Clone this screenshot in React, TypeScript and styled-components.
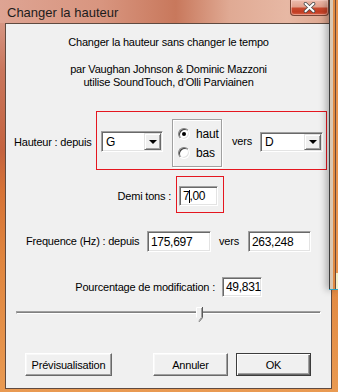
import React from "react";
import styled, { createGlobalStyle } from "styled-components";

const GlobalStyle = createGlobalStyle`
  * { box-sizing: border-box; }
  html, body { margin: 0; padding: 0; }
  body {
    width: 338px;
    height: 392px;
    overflow: hidden;
    background: #e08a40;
    font-family: "Liberation Sans", Arial, sans-serif;
  }
`;

const Window = styled.div`
  position: relative;
  width: 338px;
  height: 392px;
  display: flex;
  flex-direction: column;
  overflow: hidden;
  background:
    linear-gradient(90deg, #dea493 0%, #d8957f 30%, #c8785c 52%, #e0aa94 68%, #e7b8a4 85%, #dba28a 100%) top / 100% 23px no-repeat,
    linear-gradient(180deg, #dca494 0, #c9765c 70px, #c4633f 150px, #d67236 190px, #e0853e 260px, #e99a52 392px);
`;

const TitleBar = styled.div`
  height: 23px;
  flex: none;
  display: flex;
  align-items: flex-start;
  padding-left: 7px;
`;

const TitleText = styled.span`
  font-size: 13px;
  line-height: 23px;
  padding-top: 1px;
  color: #1c1c1c;
`;

const CloseButton = styled.div`
  margin-left: auto;
  margin-right: 9px;
  width: 39px;
  height: 16px;
  border: 1px solid #7a4636;
  border-top: none;
  border-radius: 0 0 4px 4px;
  display: flex;
  align-items: center;
  justify-content: center;
  background: linear-gradient(180deg, #ecbcad 0%, #e2a08c 45%, #c8492e 55%, #c23c22 80%, #d8654a 100%);
  box-shadow: inset 0 0 0 1px rgba(255, 220, 210, 0.45);
`;

const FrameRow = styled.div`
  flex: 1;
  display: flex;
  padding: 0 6px 3px 5px;
`;

const Client = styled.div`
  flex: 1;
  display: flex;
  flex-direction: column;
  border: 1px solid #5f4a40;
  background: #f0f0f0;
  font-size: 11px;
  letter-spacing: -0.2px;
  color: #000;
`;

const CenterLine = styled.div<{ $top: number }>`
  margin-top: ${(p) => p.$top}px;
  line-height: 13px;
  text-align: center;
  white-space: nowrap;
`;

const Row = styled.div<{ $top: number; $align?: string }>`
  margin-top: ${(p) => p.$top}px;
  display: flex;
  align-items: ${(p) => p.$align || "center"};
`;

const Label = styled.div<{ $width: number; $right?: boolean; $pad?: number; $top?: number }>`
  flex: none;
  width: ${(p) => p.$width}px;
  line-height: 13px;
  white-space: nowrap;
  text-align: ${(p) => (p.$right ? "right" : "left")};
  padding-left: ${(p) => (p.$right ? 0 : p.$pad || 0)}px;
  padding-right: ${(p) => (p.$right ? p.$pad || 0 : 0)}px;
  margin-top: ${(p) => p.$top || 0}px;
`;

const Highlight = styled.div<{ $width: number; $height: number; $pad: string }>`
  flex: none;
  width: ${(p) => p.$width}px;
  height: ${(p) => p.$height}px;
  border: 1px solid #e5161f;
  padding: ${(p) => p.$pad};
  display: flex;
  align-items: flex-start;
`;

const Combo = styled.div<{ $width: number; $height: number; $top: number; $auto?: boolean }>`
  flex: none;
  width: ${(p) => p.$width}px;
  height: ${(p) => p.$height}px;
  margin-top: ${(p) => p.$top}px;
  margin-left: ${(p) => (p.$auto ? "auto" : "0")};
  padding: 1px;
  display: flex;
  background: #fff;
  border: 1px solid;
  border-color: #a0a0a0 #fff #fff #a0a0a0;
  box-shadow: inset 1px 1px #696969, inset -1px -1px #e3e3e3;
`;

const ComboText = styled.div`
  flex: 1;
  padding-left: 3px;
  display: flex;
  align-items: center;
  font-size: 12px;
`;

const DropButton = styled.div`
  flex: none;
  width: 17px;
  display: flex;
  align-items: center;
  justify-content: center;
  background: #f0f0f0;
  border: 1px solid;
  border-color: #e3e3e3 #696969 #696969 #e3e3e3;
  box-shadow: inset 1px 1px #fff, inset -1px -1px #a0a0a0;
`;

const Arrow = styled.div`
  width: 0;
  height: 0;
  border-left: 4px solid transparent;
  border-right: 4px solid transparent;
  border-top: 4px solid #000;
`;

const RadioGroup = styled.div`
  flex: none;
  width: 50px;
  height: 48px;
  margin: 7px 0 0 9px;
  padding: 7px 0 0 5px;
  border: 1px solid #a0a0a0;
  box-shadow: inset 1px 1px #fff, 1px 1px #fff;
  display: flex;
  flex-direction: column;
  gap: 6px;
`;

const RadioRow = styled.div`
  height: 13px;
  display: flex;
  align-items: center;
  gap: 6px;
  font-size: 12px;
`;

const RadioDot = styled.div<{ $checked?: boolean }>`
  position: relative;
  width: 12px;
  height: 12px;
  border-radius: 50%;
  background: #fff;
  border: 1px solid;
  border-color: #808080 #fff #fff #808080;
  box-shadow: inset 1px 1px #404040, inset -1px -1px #e3e3e3;

  &::after {
    content: "";
    display: ${(p) => (p.$checked ? "block" : "none")};
    position: absolute;
    left: 3px;
    top: 3px;
    width: 4px;
    height: 4px;
    border-radius: 50%;
    background: #000;
  }
`;

const Word = styled.div<{ $left: number; $top?: number }>`
  flex: none;
  margin-left: ${(p) => p.$left}px;
  margin-top: ${(p) => p.$top || 0}px;
  line-height: 13px;
`;

const Field = styled.div<{ $width: number; $height: number; $left?: number; $top?: number }>`
  flex: none;
  width: ${(p) => p.$width}px;
  height: ${(p) => p.$height}px;
  margin-left: ${(p) => p.$left || 0}px;
  margin-top: ${(p) => p.$top || 0}px;
  padding-left: 3px;
  display: flex;
  align-items: center;
  background: #fff;
  font-size: 12px;
  letter-spacing: -0.3px;
  border: 1px solid;
  border-color: #a0a0a0 #fff #fff #a0a0a0;
  box-shadow: inset 1px 1px #696969, inset -1px -1px #e3e3e3;
`;

const Caret = styled.span`
  display: inline-block;
  width: 1px;
  height: 13px;
  margin-right: -1px;
  background: #000;
  vertical-align: middle;
`;

const Slider = styled.div`
  position: relative;
  margin: 8px 10px 0 10px;
  height: 16px;
  padding-top: 6px;
`;

const Track = styled.div`
  height: 3px;
  background: #808080;
  border: 1px solid;
  border-color: #a0a0a0 #fff #fff #a0a0a0;
`;

const Thumb = styled.svg`
  position: absolute;
  top: 2px;
`;

const ButtonRow = styled.div`
  margin-top: 32px;
  display: flex;
`;

const Button = styled.div<{ $width: number; $left: number; $default?: boolean }>`
  flex: none;
  width: ${(p) => p.$width}px;
  height: 23px;
  margin-left: ${(p) => p.$left}px;
  display: flex;
  align-items: center;
  justify-content: center;
  background: #f0f0f0;
  font-size: 11px;
  border: 1px solid;
  border-color: ${(p) => (p.$default ? "#3c3c3c" : "#fff #696969 #696969 #fff")};
  box-shadow: ${(p) =>
    p.$default
      ? "inset 1px 1px #fff, inset -1px -1px #696969, inset -2px -2px #a0a0a0"
      : "inset -1px -1px #a0a0a0, inset 1px 1px #f8f8f8"};
`;

const OtherWindow = styled.div`
  position: absolute;
  top: 0;
  right: 0;
  width: 9px;
  height: 290px;
  border-bottom: 1px solid #2aa4c4;
  box-shadow: -3px 0 7px rgba(0, 0, 0, 0.28);
  background: linear-gradient(
    90deg,
    #3c3c3c 0 1px,
    #d9c7b2 1px 4px,
    #e08a42 4px 6px,
    #6a4a3a 6px 7px,
    #e8924a 7px
  );

  &::after {
    content: "";
    position: absolute;
    right: 0;
    bottom: 0;
    width: 2px;
    height: 16px;
    background: #f4f0c8;
  }
`;

function CloseGlyph() {
  return (
    <svg width="13" height="11" viewBox="0 0 13 11">
      <path d="M2.5 1.8 L10.5 9.2 M10.5 1.8 L2.5 9.2" stroke="#4b4b4b" strokeWidth="3.6" strokeLinecap="round" />
      <path d="M2.5 1.8 L10.5 9.2 M10.5 1.8 L2.5 9.2" stroke="#fff" strokeWidth="2" strokeLinecap="round" />
    </svg>
  );
}

export default function App() {
  // slider position in the range, thumb drawn over the groove
  const sliderPos = 0.6;

  return (
    <>
      <GlobalStyle />
      <Window>
        <TitleBar>
          <TitleText>Changer la hauteur</TitleText>
          <CloseButton>
            <CloseGlyph />
          </CloseButton>
        </TitleBar>
        <FrameRow>
          <Client>
            <CenterLine $top={12}>Changer la hauteur sans changer le tempo</CenterLine>
            <CenterLine $top={14}>par Vaughan Johnson &amp; Dominic Mazzoni</CenterLine>
            <CenterLine $top={0}>utilise SoundTouch, d'Olli Parviainen</CenterLine>

            <Row $top={22}>
              <Label $width={90} $pad={8} $top={4}>
                Hauteur : depuis
              </Label>
              <Highlight $width={231} $height={59} $pad="0 3px 0 4px">
                <Combo $width={62} $height={21} $top={19}>
                  <ComboText>G</ComboText>
                  <DropButton>
                    <Arrow />
                  </DropButton>
                </Combo>
                <RadioGroup>
                  <RadioRow>
                    <RadioDot $checked />
                    haut
                  </RadioRow>
                  <RadioRow>
                    <RadioDot />
                    bas
                  </RadioRow>
                </RadioGroup>
                <Word $left={10} $top={23}>
                  vers
                </Word>
                <Combo $width={63} $height={20} $top={20} $auto>
                  <ComboText>D</ComboText>
                  <DropButton>
                    <Arrow />
                  </DropButton>
                </Combo>
              </Highlight>
            </Row>

            <Row $top={6} $align="flex-start">
              <Label $width={170} $right $pad={5} $top={14}>
                Demi tons :
              </Label>
              <Highlight $width={48} $height={37} $pad="9px 0 0 2px">
                <Field $width={39} $height={20}>
                  7<Caret />,00
                </Field>
              </Highlight>
            </Row>

            <Row $top={18}>
              <Label $width={141} $pad={20}>
                Frequence (Hz) : depuis
              </Label>
              <Field $width={64} $height={21}>
                175,697
              </Field>
              <Word $left={8}>vers</Word>
              <Field $width={63} $height={21} $left={9}>
                263,248
              </Field>
            </Row>

            <Row $top={25}>
              <Label $width={216} $right $pad={7}>
                Pourcentage de modification :
              </Label>
              <Field $width={40} $height={20}>
                49,831
              </Field>
            </Row>

            <Slider>
              <Track />
              <Thumb
                width="7"
                height="15"
                viewBox="0 0 7 15"
                style={{ left: `calc(${sliderPos * 100}% - 3px)` }}
              >
                <path d="M0.5 0.5 H5.5 V10.5 L3 14 L0.5 10.5 Z" fill="#f0f0f0" />
                <path d="M0.5 10.5 V0.5 H5.5" stroke="#fff" fill="none" />
                <path d="M6.5 0 V10.7 L3 14.8" stroke="#5a5a5a" fill="none" />
                <path d="M5.5 1 V10.3 L3 13.6" stroke="#a0a0a0" fill="none" />
              </Thumb>
            </Slider>

            <ButtonRow>
              <Button $width={87} $left={19}>
                Prévisualisation
              </Button>
              <Button $width={75} $left={41}>
                Annuler
              </Button>
              <Button $width={75} $left={8} $default>
                OK
              </Button>
            </ButtonRow>
          </Client>
        </FrameRow>
        <OtherWindow />
      </Window>
    </>
  );
}
